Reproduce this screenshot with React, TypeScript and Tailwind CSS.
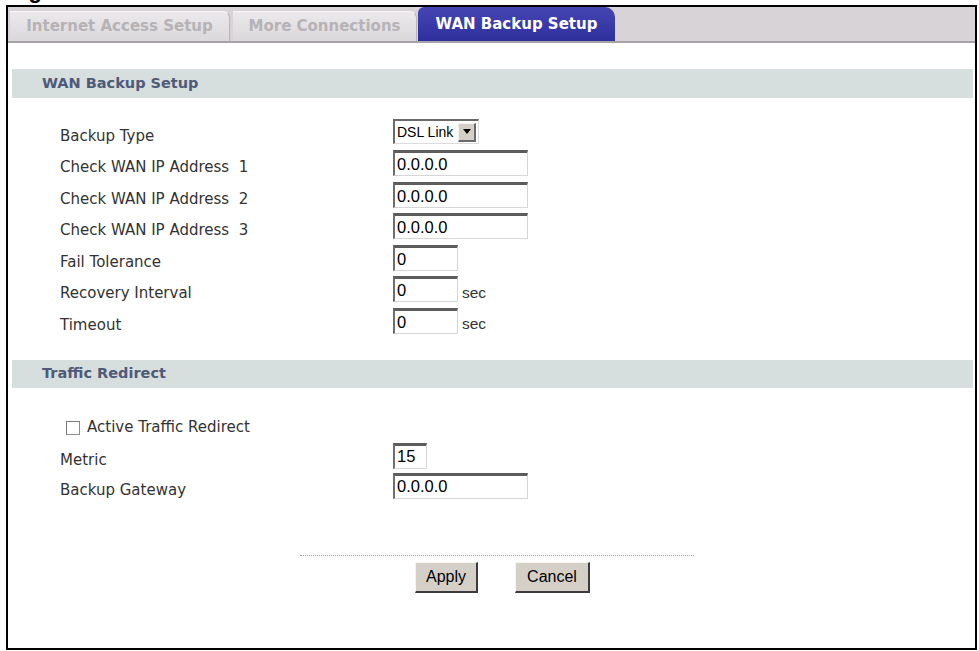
type Row = {
  label: string;
  value?: string;
  w?: string;
  unit?: string;
  select?: boolean;
};

const rows: Row[] = [
  { label: "Backup Type", select: true },
  { label: "Check WAN IP Address  1", value: "0.0.0.0", w: "w-[135px]" },
  { label: "Check WAN IP Address  2", value: "0.0.0.0", w: "w-[135px]" },
  { label: "Check WAN IP Address  3", value: "0.0.0.0", w: "w-[135px]" },
  { label: "Fail Tolerance", value: "0", w: "w-[65px]" },
  { label: "Recovery Interval", value: "0", w: "w-[65px]", unit: "sec" },
  { label: "Timeout", value: "0", w: "w-[65px]", unit: "sec" },
];

const Field = ({ value, w }: { value: string; w: string }) => (
  <div
    className={`${w} h-[26px] bg-white border-t-[3px] border-l-2 border-r border-b border-t-[#5c5c5c] border-l-[#6e6e6e] border-r-[#d6d6d6] border-b-[#d6d6d6] flex items-center pl-[2px] text-[16.5px] leading-none text-black font-['Liberation_Sans',sans-serif]`}
  >
    {value}
  </div>
);

const Select = () => (
  <div className="w-[86px] h-[25px] bg-white border-t-2 border-l-2 border-r border-b border-t-[#6a6a6a] border-l-[#6a6a6a] border-r-[#dcdcdc] border-b-[#dcdcdc] flex items-center">
    <span className="flex-1 pl-[2px] text-[14px] leading-none text-black font-['Liberation_Sans',sans-serif]">DSL Link</span>
    <div className="w-[18px] h-[19px] mr-[2px] bg-[#d4d0c8] border-t border-l border-t-[#f2f2f2] border-l-[#f2f2f2] border-b-2 border-r-2 border-b-[#6a6a6a] border-r-[#6a6a6a] flex items-center justify-center">
      <svg width="8" height="5" viewBox="0 0 8 5">
        <path d="M0 0H8L4 5Z" fill="#000" />
      </svg>
    </div>
  </div>
);

const Label = ({ text }: { text: string }) => (
  <div className="w-[385px] pl-[52px] mt-[8px] whitespace-pre text-[15px] leading-[20px] text-[#333333] font-['DejaVu_Sans',sans-serif]">
    {text}
  </div>
);

const SectionHeader = ({ title }: { title: string }) => (
  <div className="ml-[4px] mr-[2px] h-[29px] bg-[#d6dede] flex items-center pl-[30px] text-[14.5px] font-bold text-[#4f5a78] font-['DejaVu_Sans',sans-serif]">
    {title}
  </div>
);

const Button = ({ text, w }: { text: string; w: string }) => (
  <div
    className={`${w} h-[31px] bg-[#d4d0c8] border-t border-l border-t-[#f4f4f4] border-l-[#f4f4f4] border-b-2 border-r-2 border-b-[#3c3c3c] border-r-[#3c3c3c] flex items-center justify-center text-[16px] text-black font-['Liberation_Sans',sans-serif]`}
  >
    {text}
  </div>
);

export default function App() {
  return (
    <div className="w-[979px] h-[651px] bg-white overflow-hidden">
      {/* caption above the frame, cut off by the crop */}
      <div className="h-[5px] overflow-hidden">
        <div className="-mt-[20px] pl-[9px] text-[22px] leading-none font-bold text-black font-['Liberation_Sans',sans-serif]">
          Figure 75
        </div>
      </div>

      <div className="ml-[6px] w-[971px] h-[645px] border-2 border-black">
        {/* tabs */}
        <div className="h-[36px] bg-[#d7d3d7] border-b-2 border-[#a6a2a6] flex items-end font-['DejaVu_Sans',sans-serif] text-[15px] font-bold">
          <div className="ml-[2px] w-[220px] h-[30px] rounded-tr-[7px] bg-gradient-to-b from-[#ebe9eb] to-[#dbd8db] border-t border-r border-t-[#f6f6f6] border-r-[#b9b5b9] flex items-center justify-center text-[#b6b2b6]">
            Internet Access Setup
          </div>
          <div className="ml-[3px] w-[184px] h-[30px] rounded-tr-[7px] bg-gradient-to-b from-[#ebe9eb] to-[#dbd8db] border-t border-r border-t-[#f6f6f6] border-r-[#b9b5b9] flex items-center justify-center text-[#b6b2b6]">
            More Connections
          </div>
          <div className="ml-[1px] w-[197px] h-[34px] rounded-tl-[6px] rounded-tr-[10px] bg-gradient-to-b from-[#4545b4] to-[#2f2f9c] flex items-center justify-center text-white">
            WAN Backup Setup
          </div>
        </div>

        <div className="mt-[26px]">
          <SectionHeader title="WAN Backup Setup" />
        </div>

        <div className="mt-[18px]">
          {rows.map((r) => (
            <div key={r.label} className="h-[31.5px] flex items-center">
              <Label text={r.label} />
              {r.select ? <Select /> : <Field value={r.value ?? ""} w={r.w ?? "w-[135px]"} />}
              {r.unit && (
                <span className="ml-[4px] mt-[6px] text-[15.5px] text-[#333333] font-['Liberation_Sans',sans-serif]">
                  {r.unit}
                </span>
              )}
            </div>
          ))}
        </div>

        <div className="mt-[23.5px]">
          <div className="ml-[4px] mr-[2px] h-[28px] bg-[#d6dede] flex items-center pl-[30px] text-[14.5px] font-bold text-[#4f5a78] font-['DejaVu_Sans',sans-serif]">
            Traffic Redirect
          </div>
        </div>

        <div className="mt-[23px]">
          <div className="h-[30px] flex items-center pl-[58px] pt-[3px]">
            <div className="w-[14px] h-[14px] bg-white border border-[#8c8c8c] border-t-[#7a7a7a] border-l-[#7a7a7a]" />
            <span className="ml-[7px] text-[15px] text-[#333333] font-['DejaVu_Sans',sans-serif]">
              Active Traffic Redirect
            </span>
          </div>
          <div className="h-[29px] flex items-center">
            <Label text="Metric" />
            <Field value="15" w="w-[34px]" />
          </div>
          <div className="h-[31px] flex items-center">
            <Label text="Backup Gateway" />
            <Field value="0.0.0.0" w="w-[135px]" />
          </div>
        </div>

        <div className="mt-[54px] ml-[292px] w-[394px] border-t border-dotted border-[#a0a0a0]" />

        <div className="mt-[6px] flex pl-[407px] gap-[37px]">
          <Button text="Apply" w="w-[63px]" />
          <Button text="Cancel" w="w-[75px]" />
        </div>
      </div>
    </div>
  );
}
